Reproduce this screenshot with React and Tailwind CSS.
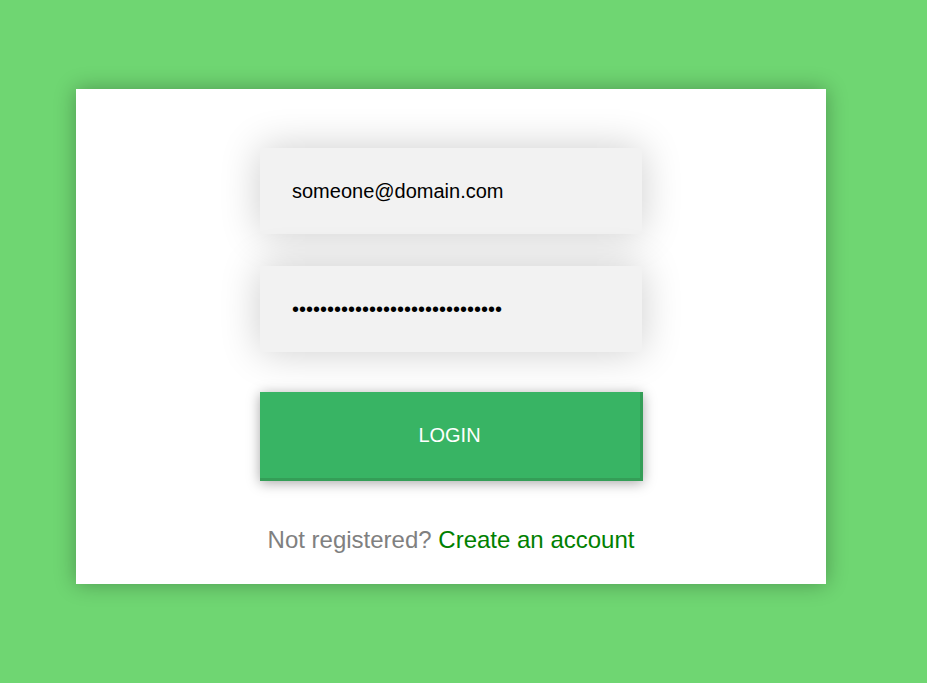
import React from "react";

export default function App() {
    return (
        <div className="min-h-[683px] w-full bg-[#6fd672] pt-[89px] font-['Liberation_Sans',Arial,sans-serif]">
            <div className="ml-[76px] w-[750px] h-[495px] bg-white shadow-[0_0_20px_0_rgba(0,0,0,0.3)] flex flex-col items-center pt-[59px]">
                <div className="w-[382px] h-[86px] bg-[#f2f2f2] shadow-[0_0_40px_0_rgba(0,0,0,0.2)] flex items-center pl-[32px] text-[20px] text-black">
                    someone@domain.com
                </div>
                <div className="mt-[32px] w-[382px] h-[86px] bg-[#f2f2f2] shadow-[0_0_40px_0_rgba(0,0,0,0.2)] flex items-center pl-[32px] text-[20px] text-black">
                    ••••••••••••••••••••••••••••••
                </div>
                <button className="mt-[40px] w-[383px] h-[89px] bg-[#38b464] border-r-[3px] border-b-[3px] border-[#349e57] shadow-[0_2px_12px_0_rgba(0,0,0,0.35)] text-white text-[20px] flex items-center justify-center">
                    LOGIN
                </button>
                <p className="mt-[41px] text-[24px] text-[#808080]">
                    Not registered? <span className="text-[#008000]">Create an account</span>
                </p>
            </div>
        </div>
    );
}
